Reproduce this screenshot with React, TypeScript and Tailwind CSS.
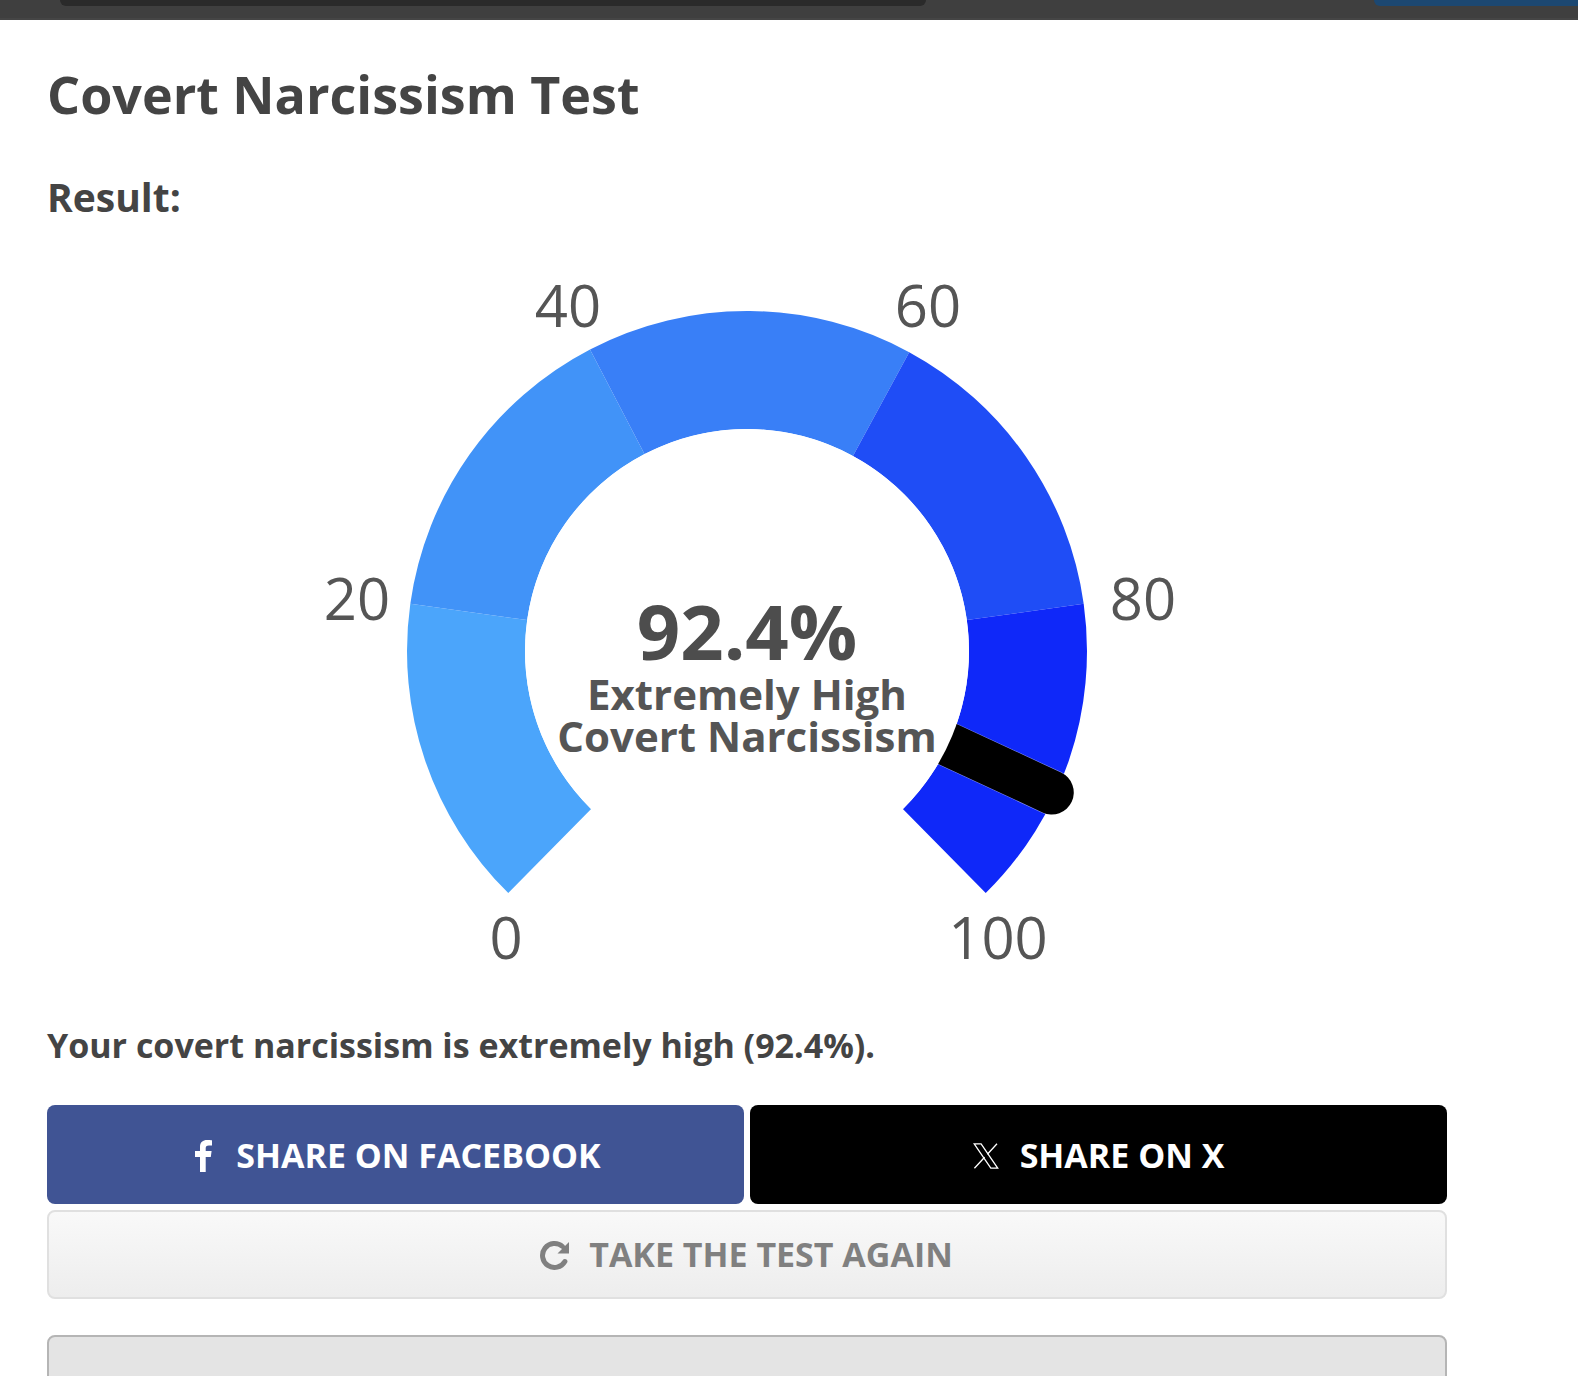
const CX = 700;
const CY = 411;
const OUTER = 340;
const INNER = 222;

// angles are measured clockwise from the top of the gauge
function polar(r: number, deg: number) {
  const a = (deg * Math.PI) / 180;
  return `${(CX + r * Math.sin(a)).toFixed(2)} ${(CY - r * Math.cos(a)).toFixed(2)}`;
}

function segment(from: number, to: number) {
  return `M${polar(OUTER, from)} A${OUTER} ${OUTER} 0 0 1 ${polar(OUTER, to)} L${polar(INNER, to)} A${INNER} ${INNER} 0 0 0 ${polar(INNER, from)} Z`;
}

const segments = [
  { from: -135.4, to: -82, color: "#4ba5fb" },
  { from: -82, to: -27.5, color: "#4193f8" },
  { from: -27.5, to: 28.5, color: "#397ff7" },
  { from: 28.5, to: 82, color: "#1f4df6" },
  { from: 82, to: 135.4, color: "#0f28f9" },
];

const ticks = [
  { x: 310, y: 380, label: "20" },
  { x: 521, y: 87, label: "40" },
  { x: 881, y: 87, label: "60" },
  { x: 1096, y: 380, label: "80" },
  { x: 459, y: 719, label: "0" },
  { x: 951, y: 719, label: "100" },
];

function Gauge() {
  const needle = 114.9;
  const needleLine = `M${polar(180, needle)} L${polar(336, needle)}`;
  return (
    <svg viewBox="0 0 1400 783" className="block h-[783px] w-[1400px]">
      {segments.map((s) => (
        <path key={s.from} d={segment(s.from, s.to)} fill={s.color} />
      ))}
      <path d={needleLine} stroke="#fff" strokeOpacity={0.5} strokeWidth={45} strokeLinecap="round" fill="none" />
      <path d={needleLine} stroke="#000" strokeWidth={44} strokeLinecap="round" fill="none" />
      <circle cx={CX} cy={CY} r={INNER} fill="#fff" />
      {ticks.map((t) => (
        <text key={t.label} x={t.x} y={t.y} textAnchor="middle" fontSize={58} fill="#555">
          {t.label}
        </text>
      ))}
      <text x={CX} y={420} textAnchor="middle" fontSize={76} fontWeight={700} fill="#4d4d4d">
        92.4%
      </text>
      <text x={CX} y={470} textAnchor="middle" fontSize={42} fontWeight={700} fill="#555">
        Extremely High
      </text>
      <text x={CX} y={512} textAnchor="middle" fontSize={42} fontWeight={700} fill="#555">
        Covert Narcissism
      </text>
    </svg>
  );
}

function FacebookIcon() {
  return (
    <svg viewBox="0 0 17 32" className="h-[32px] w-[17px]" fill="currentColor">
      <path d="M5 32V17H0v-6h5V7c0-5 3-7 7-7 2 0 4 .1 5 .3v5.2h-3c-2.7 0-3.3 1.1-3.3 2.8V11h5.9l-.8 6h-5.1v15z" />
    </svg>
  );
}

function XIcon() {
  return (
    <svg viewBox="0 0 26 26" className="h-[26px] w-[26px]" fill="none" stroke="currentColor" strokeWidth={1.3}>
      <path d="M1.2.8h6.9l16.6 24.4h-6.9z" />
      <path d="M24 .8 14.4 11.3M1.4 25.2l10.2-11" />
    </svg>
  );
}

function RedoIcon() {
  return (
    <svg viewBox="0 0 30 30" className="h-[30px] w-[30px]">
      <path d="M24.9 21.5A12 12 0 1 1 22.5 6.5" fill="none" stroke="currentColor" strokeWidth={5} strokeLinecap="round" />
      <path d="M29 2v11.5H17.5z" fill="currentColor" />
    </svg>
  );
}

export default function App() {
  return (
    <div className="h-[1376px] overflow-hidden bg-white font-['Open_Sans',sans-serif] text-[#444]">
      {/* 상단 바 */}
      <div className="flex h-5 items-start justify-between border-b-2 border-[#454545] bg-[#3f3f3f] pl-[60px]">
        <div className="h-1.5 w-[866px] rounded-b-2xl bg-[#2a2a2a]" />
        <div className="h-1.5 w-[204px] rounded-bl-2xl bg-[#1c4872]" />
      </div>

      <div className="w-[1447px] pl-[47px]">
        <h1 className="mt-[44px] text-[52px] leading-[60px] font-bold">Covert Narcissism Test</h1>
        <h2 className="mt-[49px] text-[39px] leading-[48px] font-bold">Result:</h2>

        <div className="mt-[19px]">
          <Gauge />
        </div>

        <p className="text-[34px] leading-[44px] font-bold">
          Your covert narcissism is extremely high (92.4%).
        </p>

        <div className="mt-[38px] grid grid-cols-2 gap-[6px]">
          <button className="flex h-[99px] items-center justify-center gap-[24px] rounded-lg bg-[#405494] pt-[2px] pl-[5px] text-[34px] font-bold text-white">
            <FacebookIcon />
            SHARE ON FACEBOOK
          </button>
          <button className="flex h-[99px] items-center justify-center gap-[21px] rounded-lg bg-black pt-[2px] text-[34px] font-bold text-white">
            <XIcon />
            SHARE ON X
          </button>
        </div>

        <button className="mt-[6px] flex h-[89px] w-full items-center justify-center gap-[19px] rounded-lg border-2 border-[#e0e0e0] bg-gradient-to-b from-[#f9f9f9] to-[#ededed] pr-[1px] text-[34px] font-bold text-[#808080]">
          <RedoIcon />
          TAKE THE TEST AGAIN
        </button>

        <div className="mt-[36px] h-[100px] rounded-lg border-2 border-[#b5b5b5] bg-[#e4e4e4]" />
      </div>
    </div>
  );
}
